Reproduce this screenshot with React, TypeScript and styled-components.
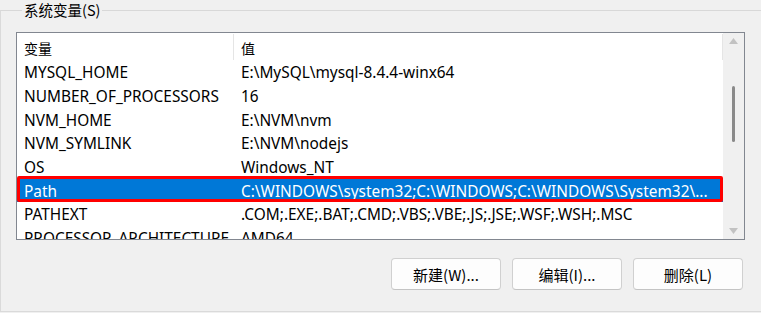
import React from 'react';
import styled, { createGlobalStyle } from 'styled-components';

const GlobalStyle = createGlobalStyle`
  html, body {
    margin: 0;
    padding: 0;
    background: #f0f0f0;
    width: 761px;
    height: 313px;
    overflow: hidden;
    font-family: "Noto Sans", "Noto Sans CJK SC", sans-serif;
  }
`;

// group box
const Group = styled.fieldset`
  box-sizing: border-box;
  margin: 0;
  width: 800px;
  height: 312px;
  padding: 12px 0 0 15px;
  border: 1px solid #dadada;
  border-top-color: #d8d8d8;
`;

const Legend = styled.legend`
  margin-left: 6px;
  padding: 0 2px;
  font-size: 14.5px;
  line-height: 20px;
  color: #000;
  font-family: "Noto Sans CJK SC", "Noto Sans", sans-serif;
`;

// list view
const ListBox = styled.div`
  box-sizing: border-box;
  width: 729px;
  height: 208px;
  border: 1px solid #828790;
  background: #fff;
  display: flex;
  overflow: hidden;
`;

const ListBody = styled.div`
  flex: 1;
  display: flex;
  flex-direction: column;
  overflow: hidden;
`;

const HeaderRow = styled.div`
  display: flex;
  height: 27px;
  flex-shrink: 0;
  align-items: stretch;
  font-family: "Noto Sans CJK SC", "Noto Sans", sans-serif;
  font-size: 14px;
`;

const HeaderCell = styled.div<{ $w?: number }>`
  box-sizing: border-box;
  ${(p) => (p.$w ? `width: ${p.$w}px;` : 'flex: 1;')}
  display: flex;
  align-items: center;
  padding-left: 7px;
  padding-top: 2px;
  border-right: 1px solid #e5e5e5;
  margin: 1px 0 0;
  color: #000;
`;

const Row = styled.div<{ $selected?: boolean }>`
  position: relative;
  display: flex;
  height: 23.7px;
  flex-shrink: 0;
  align-items: center;
  font-size: 15.4px;
  background: ${(p) => (p.$selected ? '#0078d7' : 'transparent')};
  color: ${(p) => (p.$selected ? '#fff' : '#000')};
`;

const Cell = styled.div<{ $w?: number }>`
  box-sizing: border-box;
  ${(p) => (p.$w ? `width: ${p.$w}px;` : 'flex: 1;')}
  padding: 2px 0 0 7px;
  white-space: nowrap;
  overflow: hidden;
`;

// red annotation box around the selected row
const Mark = styled.div`
  position: absolute;
  left: 0;
  right: 0;
  top: -2px;
  bottom: 0;
  border: 3px solid #ff0000;
  border-radius: 2px;
  pointer-events: none;
`;

// scrollbar
const ScrollBar = styled.div`
  width: 21px;
  flex-shrink: 0;
  background: #f0f0f0;
  display: flex;
  flex-direction: column;
  align-items: center;
  justify-content: space-between;
  padding: 5px 0;
  box-sizing: border-box;
`;

const Thumb = styled.div`
  width: 3px;
  height: 56px;
  border-radius: 2px;
  background: #8a8a8a;
  margin-top: 42px;
`;

const Spacer = styled.div`
  flex: 1;
`;

const ArrowSvg = styled.svg`
  display: block;
`;

// buttons
const ButtonRow = styled.div`
  display: flex;
  justify-content: flex-end;
  gap: 11px;
  width: 727px;
  margin-top: 18px;
`;

const Button = styled.button`
  box-sizing: border-box;
  width: 110px;
  height: 32px;
  background: #fdfdfd;
  border: 1px solid #d0d0d0;
  border-bottom-color: #c4c4c4;
  border-radius: 4px;
  font-family: "Noto Sans CJK SC", "Noto Sans", sans-serif;
  font-size: 15px;
  color: #000;
  padding: 0;
`;

const rows = [
  ['MYSQL_HOME', 'E:\\MySQL\\mysql-8.4.4-winx64'],
  ['NUMBER_OF_PROCESSORS', '16'],
  ['NVM_HOME', 'E:\\NVM\\nvm'],
  ['NVM_SYMLINK', 'E:\\NVM\\nodejs'],
  ['OS', 'Windows_NT'],
  ['Path', 'C:\\WINDOWS\\system32;C:\\WINDOWS;C:\\WINDOWS\\System32\\...'],
  ['PATHEXT', '.COM;.EXE;.BAT;.CMD;.VBS;.VBE;.JS;.JSE;.WSF;.WSH;.MSC'],
  ['PROCESSOR_ARCHITECTURE', 'AMD64'],
];

function Arrow({ down }: { down?: boolean }) {
  return (
    <ArrowSvg width="9" height="6" viewBox="0 0 9 6">
      <path d={down ? 'M0 0 H9 L4.5 6 Z' : 'M0 6 H9 L4.5 0 Z'} fill="#c2c2c2" />
    </ArrowSvg>
  );
}

export default function App() {
  return (
    <>
      <GlobalStyle />
      <Group>
        <Legend>系统变量(S)</Legend>
        <ListBox>
          <ListBody>
            <HeaderRow>
              <HeaderCell $w={217}>变量</HeaderCell>
              <HeaderCell>值</HeaderCell>
            </HeaderRow>
            {rows.map(([name, value]) => (
              <Row key={name} $selected={name === 'Path'}>
                <Cell $w={217}>{name}</Cell>
                <Cell>{value}</Cell>
                {name === 'Path' && <Mark />}
              </Row>
            ))}
          </ListBody>
          <ScrollBar>
            <Arrow />
            <Thumb />
            <Spacer />
            <Arrow down />
          </ScrollBar>
        </ListBox>
        <ButtonRow>
          <Button>新建(W)...</Button>
          <Button>编辑(I)...</Button>
          <Button>删除(L)</Button>
        </ButtonRow>
      </Group>
    </>
  );
}
